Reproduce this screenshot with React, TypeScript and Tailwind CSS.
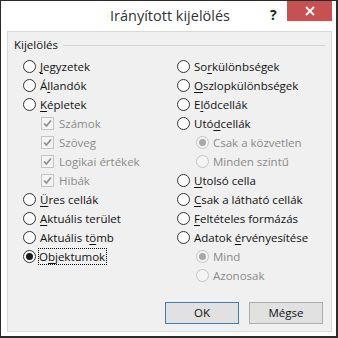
import type { ReactNode } from "react";

type Item = {
  label: ReactNode;
  kind: "radio" | "check";
  indent?: boolean;
  checked?: boolean;
  disabled?: boolean;
  focus?: boolean;
};

const u = (s: string) => <u className="underline-offset-[1.5px]">{s}</u>;

const left: Item[] = [
  { kind: "radio", label: <>{u("J")}egyzetek</> },
  { kind: "radio", label: <>Á{u("l")}landók</> },
  { kind: "radio", label: <>{u("K")}épletek</> },
  { kind: "check", indent: true, checked: true, disabled: true, label: "Számok" },
  { kind: "check", indent: true, checked: true, disabled: true, label: "Szöveg" },
  { kind: "check", indent: true, checked: true, disabled: true, label: "Logikai értékek" },
  { kind: "check", indent: true, checked: true, disabled: true, label: "Hibák" },
  { kind: "radio", label: <>{u("Ü")}res cellák</> },
  { kind: "radio", label: <>{u("A")}ktuális terület</> },
  { kind: "radio", label: <>Aktuális t{u("ö")}mb</> },
  { kind: "radio", checked: true, focus: true, label: <>O{u("b")}jektumok</> },
];

const right: Item[] = [
  { kind: "radio", label: <>So{u("r")}különbségek</> },
  { kind: "radio", label: <>{u("O")}szlopkülönbségek</> },
  { kind: "radio", label: <>E{u("l")}ődcellák</> },
  { kind: "radio", label: <>Utó{u("d")}cellák</> },
  { kind: "radio", indent: true, checked: true, disabled: true, label: "Csak a közvetlen" },
  { kind: "radio", indent: true, disabled: true, label: "Minden szintű" },
  { kind: "radio", label: <>{u("U")}tolsó cella</> },
  { kind: "radio", label: <>{u("C")}sak a látható cellák</> },
  { kind: "radio", label: <>{u("F")}eltételes formázás</> },
  { kind: "radio", label: <>Adatok {u("é")}rvényesítése</> },
  { kind: "radio", indent: true, checked: true, disabled: true, label: "Mind" },
  { kind: "radio", indent: true, disabled: true, label: "Azonosak" },
];

function Radio({ checked, disabled }: { checked?: boolean; disabled?: boolean }) {
  return (
    <span
      className={`flex h-[13px] w-[13px] shrink-0 items-center justify-center rounded-full border ${
        disabled ? "border-[#c4c4c4] bg-[#f4f4f4]" : "border-[#333333] bg-white"
      }`}
    >
      {checked && (
        <span
          className={`h-[7px] w-[7px] rounded-full ${disabled ? "bg-[#a8a8a8]" : "bg-[#1a1a1a]"}`}
        />
      )}
    </span>
  );
}

function Check() {
  return (
    <span className="flex h-[13px] w-[13px] shrink-0 items-center justify-center border border-[#c4c4c4] bg-[#f4f4f4]">
      <svg width="9" height="9" viewBox="0 0 9 9">
        <path d="M1 4.5 L3.4 7 L8 1.5" fill="none" stroke="#8c8c8c" strokeWidth="1.6" />
      </svg>
    </span>
  );
}

function Row({ item }: { item: Item }) {
  const gap = item.focus ? "ml-[2px] border border-dotted border-black pr-[1px]" : item.kind === "check" ? "ml-[5px]" : "ml-[4px]";
  return (
    <div className={`flex h-[19px] items-center ${item.indent ? (item.kind === "check" ? "pl-[18px]" : "pl-[19px]") : ""}`}>
      {item.kind === "radio" ? (
        <Radio checked={item.checked} disabled={item.disabled} />
      ) : (
        <Check />
      )}
      <span
        className={`${gap} whitespace-nowrap leading-[15px] ${
          item.disabled ? "text-[#8a8a8a]" : "text-[#111]"
        }`}
      >
        {item.label}
      </span>
    </div>
  );
}

export default function App() {
  return (
    <div
      className="flex h-[338px] w-[338px] flex-col border-l border-t border-r-2 border-b-2 border-[#2b2b2b] bg-white text-[11.5px]"
      style={{ fontFamily: '"Open Sans", "Noto Sans", sans-serif' }}
    >
      <div className="relative flex h-[30px] shrink-0 items-center justify-center">
        <span className="ml-[3px] text-[14.5px] text-[#333333]">Irányított kijelölés</span>
        <span className="absolute left-[269px] top-[3px] text-[14px] font-bold text-[#222]">?</span>
        <div className="absolute right-[4px] top-0 flex h-[20px] w-[45px] items-center justify-center bg-[#c75050]">
          <svg width="10" height="10" viewBox="0 0 10 10">
            <path d="M1 1 L9 9 M9 1 L1 9" stroke="white" strokeWidth="1.8" />
          </svg>
        </div>
      </div>

      <div className="mb-[4px] ml-[6px] mr-[4px] flex flex-1 flex-col border border-[#d9d9d9] bg-[#f0f0f0] pt-[5px] pb-[7px]">
        <div className="flex h-[16px] items-center pl-[6px] pr-[6px]">
          <span className="text-[#111]">Kijelölés</span>
          <div className="ml-[5px] h-px flex-1 bg-[#d5d5d5]" />
        </div>

        <div className="mt-[4px] grid grid-cols-[154px_1fr] pl-[15px]">
          <div className="flex flex-col">
            {left.map((it, i) => (
              <Row key={i} item={it} />
            ))}
          </div>
          <div className="flex flex-col">
            {right.map((it, i) => (
              <Row key={i} item={it} />
            ))}
          </div>
        </div>

        <div className="mt-auto flex justify-end gap-[10px] pr-[8px]">
          <button className="h-[22px] w-[74px] border border-[#3c7fb1] bg-[#e1e1e1] text-[#111]">
            OK
          </button>
          <button className="h-[22px] w-[74px] border border-[#adadad] bg-[#e1e1e1] text-[#111]">
            Mégse
          </button>
        </div>
      </div>
    </div>
  );
}
